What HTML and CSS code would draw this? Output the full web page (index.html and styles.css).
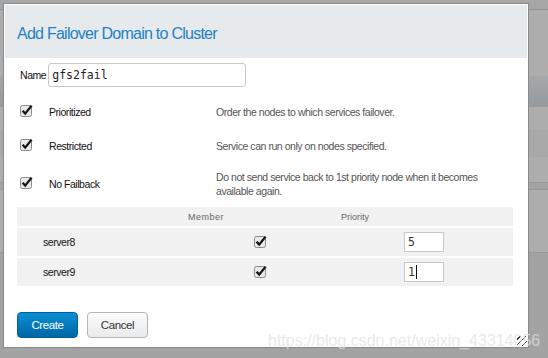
FILE: index.html
```html
<!DOCTYPE html>
<html lang="en">
<head>
    <meta charset="UTF-8">
    <title>Add Failover Domain to Cluster</title>
    <link rel="stylesheet" href="styles.css">
</head>
<body>
    <div class="page">
        <div class="band band-top"></div>
        <div class="band band-a"></div>
        <div class="band band-bar"></div>
        <div class="band band-b"></div>
        <div class="band band-c"></div>
        <div class="band band-b2"></div>
        <div class="band band-d"></div>
    </div>

    <div class="dialog">
        <div class="dialog-header">Add Failover Domain to Cluster</div>
        <div class="dialog-body">
            <div class="name-row">
                <label for="fd-name">Name</label>
                <input id="fd-name" class="text-input" type="text" value="gfs2fail">
            </div>

            <div class="options">
                <div class="option">
                    <span class="check"><svg width="14" height="13" viewBox="0 0 14 13"><rect x="0.5" y="1.5" width="11" height="11" rx="2" fill="#e9e9e9" stroke="#8a8a8a"/><path d="M2.6 6.8 L5.2 9.6 L11.6 1.6" fill="none" stroke="#111" stroke-width="2.3"/></svg></span>
                    <span class="opt-label">Prioritized</span>
                    <span class="opt-desc">Order the nodes to which services failover.</span>
                </div>
                <div class="option">
                    <span class="check"><svg width="14" height="13" viewBox="0 0 14 13"><rect x="0.5" y="1.5" width="11" height="11" rx="2" fill="#e9e9e9" stroke="#8a8a8a"/><path d="M2.6 6.8 L5.2 9.6 L11.6 1.6" fill="none" stroke="#111" stroke-width="2.3"/></svg></span>
                    <span class="opt-label">Restricted</span>
                    <span class="opt-desc">Service can run only on nodes specified.</span>
                </div>
                <div class="option option-last">
                    <span class="check"><svg width="14" height="13" viewBox="0 0 14 13"><rect x="0.5" y="1.5" width="11" height="11" rx="2" fill="#e9e9e9" stroke="#8a8a8a"/><path d="M2.6 6.8 L5.2 9.6 L11.6 1.6" fill="none" stroke="#111" stroke-width="2.3"/></svg></span>
                    <span class="opt-label">No Failback</span>
                    <span class="opt-desc">Do not send service back to 1st priority node when it becomes available again.</span>
                </div>
            </div>

            <div class="nodes">
                <div class="nodes-row nodes-head">
                    <span></span>
                    <span class="head-member">Member</span>
                    <span class="head-priority">Priority</span>
                </div>
                <div class="nodes-row node">
                    <span class="node-name">server8</span>
                    <span class="node-member"><svg width="14" height="13" viewBox="0 0 14 13"><rect x="0.5" y="1.5" width="11" height="11" rx="2" fill="#e9e9e9" stroke="#8a8a8a"/><path d="M2.6 6.8 L5.2 9.6 L11.6 1.6" fill="none" stroke="#111" stroke-width="2.3"/></svg></span>
                    <span class="node-priority"><input class="prio-input" type="text" value="5"></span>
                </div>
                <div class="nodes-row node">
                    <span class="node-name">server9</span>
                    <span class="node-member"><svg width="14" height="13" viewBox="0 0 14 13"><rect x="0.5" y="1.5" width="11" height="11" rx="2" fill="#e9e9e9" stroke="#8a8a8a"/><path d="M2.6 6.8 L5.2 9.6 L11.6 1.6" fill="none" stroke="#111" stroke-width="2.3"/></svg></span>
                    <span class="node-priority"><span class="prio-input">1<span class="caret"></span></span></span>
                </div>
            </div>

            <div class="actions">
                <button class="btn btn-primary">Create</button>
                <button class="btn btn-default">Cancel</button>
            </div>
        </div>
        <div class="grip"></div>
    </div>

    <div class="watermark">https://blog.csdn.net/weixin_43314056</div>
</body>
</html>
```

FILE: styles.css
```css
* {
    margin: 0;
    padding: 0;
    box-sizing: border-box;
}

body {
    font-family: 'Liberation Sans', Arial, sans-serif;
    font-size: 10.5px;
    letter-spacing: -0.45px;
    background: #a3a3a3;
    width: 548px;
    height: 358px;
    overflow: hidden;
    position: relative;
}

/* dimmed page behind the modal */
.page {
    display: flex;
    flex-direction: column;
}

.band-top {
    height: 10px;
    background: #a6a6a6;
    border-bottom: 1px solid #939393;
}

.band-a {
    height: 66px;
    background: #adadad;
}

.band-bar {
    height: 31px;
    background: linear-gradient(#a4a8ab, #969a9d);
}

.band-b {
    height: 23px;
    background: #adadad;
}

.band-c {
    height: 27px;
    background: #a8a8a8;
}

.band-b2 {
    height: 26px;
    background: #adadad;
    border-bottom: 1px solid #999;
}

.band-d {
    height: 64px;
    margin-top: 6px;
    background: #adadad;
    border-top: 1px solid #999;
    border-bottom: 1px solid #999;
}

/* modal */
.dialog {
    position: absolute;
    left: 3px;
    top: 3px;
    width: 526px;
    height: 345px;
    background: #fff;
    border: 1px solid #8a8a8a;
    padding: 1px;
}

.dialog-header {
    height: 53px;
    background: #e6eaed;
    color: #1d82c2;
    font-size: 16px;
    letter-spacing: -0.75px;
    padding: 4px 12px 0;
    display: flex;
    align-items: center;
}

.dialog-body {
    padding: 0 12px;
}

.name-row {
    display: flex;
    align-items: center;
    gap: 2px;
    margin-top: 5px;
    padding-left: 3px;
}

.name-row label {
    color: #111;
}

.text-input {
    width: 198px;
    height: 24px;
    border: 1px solid #c8c8c8;
    border-radius: 3px;
    padding: 0 3px;
    font-family: 'DejaVu Sans Mono', monospace;
    font-size: 11.5px;
    letter-spacing: 0;
    color: #222;
    outline: none;
}

.options {
    margin-top: 8px;
    margin-bottom: 6px;
}

.option {
    display: grid;
    grid-template-columns: 32px 167px 1fr;
    align-items: center;
    padding: 10px 0;
    line-height: 14px;
}

.option-last {
    padding-top: 7px;
    padding-bottom: 3px;
}

.check {
    display: flex;
    padding-left: 3px;
    margin-top: -3px;
}

.opt-label {
    color: #111;
}

.opt-desc {
    color: #555;
    padding-right: 20px;
}

/* nodes table */
.nodes {
    display: flex;
    flex-direction: column;
    gap: 2px;
    width: 496px;
}

.nodes-row {
    display: grid;
    grid-template-columns: 118px 142px 1fr;
    align-items: center;
    background: #f1f1f1;
}

.nodes-head {
    height: 19px;
    color: #666;
    font-size: 9px;
    letter-spacing: 0;
}

.head-member {
    text-align: center;
    letter-spacing: 0.5px;
}

.head-priority {
    text-align: center;
    padding-right: 80px;
}

.node {
    height: 28px;
}

.node-name {
    padding-left: 26px;
    color: #111;
}

.node-member {
    display: flex;
    justify-content: flex-end;
    padding-right: 9px;
    margin-top: -2px;
}

.node-priority {
    padding-left: 127px;
    display: flex;
}

.prio-input {
    width: 40px;
    height: 20px;
    border: 1px solid #c8c8c8;
    background: #fff;
    font-family: 'DejaVu Sans Mono', monospace;
    font-size: 11.5px;
    letter-spacing: 0;
    color: #333;
    padding: 0 3px;
    outline: none;
    display: flex;
    align-items: center;
}

.caret {
    display: inline-block;
    width: 1px;
    height: 14px;
    background: #111;
    margin-left: 1px;
}

/* buttons */
.actions {
    display: flex;
    gap: 9px;
    margin-top: 26px;
}

.btn {
    width: 61px;
    height: 26px;
    border-radius: 4px;
    font-family: 'Liberation Sans', Arial, sans-serif;
    font-size: 11.5px;
    letter-spacing: -0.4px;
    cursor: pointer;
}

.btn-primary {
    background: linear-gradient(#0b8fd6, #0066a3);
    border: 1px solid #00609a;
    color: #fff;
}

.btn-default {
    background: linear-gradient(#fbfbfb, #e9eaeb);
    border: 1px solid #b4b4b4;
    color: #333;
}

.grip {
    position: absolute;
    right: 1px;
    bottom: 1px;
    width: 10px;
    height: 10px;
    background: repeating-linear-gradient(135deg, transparent 0 2px, #333 2px 3px, transparent 3px 4px);
}

.watermark {
    position: absolute;
    left: 268px;
    top: 332px;
    font-size: 16px;
    letter-spacing: 0;
    color: rgba(225, 225, 225, 0.75);
    white-space: nowrap;
}
```
